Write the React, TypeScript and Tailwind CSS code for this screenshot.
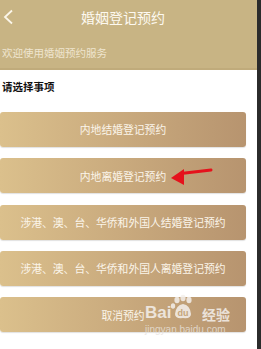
import React from "react";

const btns = [
  "内地结婚登记预约",
  "内地离婚登记预约",
  "涉港、澳、台、华侨和外国人结婚登记预约",
  "涉港、澳、台、华侨和外国人离婚登记预约",
  "取消预约",
];

export default function App() {
  return (
    <div
      className="w-[261px] h-[349px] flex bg-[#2b2b2b] overflow-hidden"
      style={{ fontFamily: '"Noto Sans CJK SC", "Noto Sans", sans-serif' }}
    >
      <div className="relative w-[257px] h-full bg-white">
        <div className="h-[70px] bg-[#c8b484] border-b-[2px] border-[#c0ab7b] flex flex-col">
          <div className="relative h-[34px] w-[246px] flex items-center justify-center">
            <svg className="absolute left-[2px] top-[9px]" width="12" height="16" viewBox="0 0 12 16">
              <polyline points="10,1.5 3,8 10,14.5" fill="none" stroke="#fbf6ea" strokeWidth="1.8" strokeLinejoin="miter" />
            </svg>
            <span className="text-[14px] leading-[16px] text-[#fdf9f0]">婚姻登记预约</span>
          </div>
          <div className="mt-[12px] pl-[2px] text-[10.5px] leading-[14px] text-[#efe5cf]">欢迎使用婚姻预约服务</div>
        </div>
        <div className="mt-[9px] h-[16px] pl-[2px] text-[10.5px] leading-[16px] font-bold text-[#111]">请选择事项</div>
        <div className="mt-[17px] flex flex-col gap-[11.3px]">
          {btns.map((t) => (
            <div
              key={t}
              className="w-[246px] h-[35px] rounded-[3px] bg-gradient-to-r from-[#dbc08c] to-[#b7946f] shadow-[0_1px_1px_rgba(0,0,0,0.12)] flex items-center justify-center text-[10.8px] text-[#fbf5ea]"
            >
              {t}
            </div>
          ))}
        </div>
        <svg className="absolute left-0 top-0 pointer-events-none" width="257" height="349" viewBox="0 0 257 349">
          <line x1="181" y1="173.5" x2="211" y2="170" stroke="#e5121c" strokeWidth="3" strokeLinecap="round" />
          <polygon points="171,178 184,169 184,185" fill="#e5121c" />
        </svg>
        <span
          className="absolute left-[145px] top-[303px] text-[17px] font-bold leading-[20px] text-[#f4f0ec] opacity-85 pointer-events-none"
          style={{ fontFamily: '"Liberation Sans", sans-serif' }}
        >
          Bai
        </span>
        <svg width="26" height="26" viewBox="0 0 26 26" className="absolute left-[170px] top-[294px] opacity-85 pointer-events-none">
          <ellipse cx="7" cy="6" rx="2.6" ry="3.2" fill="#f4f0ec" />
          <ellipse cx="13" cy="4" rx="2.6" ry="3.2" fill="#f4f0ec" />
          <ellipse cx="19" cy="6" rx="2.6" ry="3.2" fill="#f4f0ec" />
          <ellipse cx="3" cy="12" rx="2.2" ry="2.8" fill="#f4f0ec" />
          <path d="M5 20 Q6 11 13 10 Q20 11 21 20 Q21 25 13 24 Q5 25 5 20 Z" fill="#f4f0ec" />
          <text x="13" y="22" textAnchor="middle" fontSize="9" fontWeight="bold" fill="#c7a77c" fontFamily="Liberation Sans, sans-serif">du</text>
        </svg>
        <span className="absolute left-[202px] top-[304px] text-[14px] font-bold leading-[20px] text-[#f4f0ec] opacity-85 pointer-events-none">
          经验
        </span>
        <div
          className="absolute left-[145px] top-[324px] text-[10px] leading-[12px] text-[#e8e2dc] opacity-80 pointer-events-none"
          style={{ fontFamily: '"Liberation Sans", sans-serif' }}
        >
          jingyan.baidu.com
        </div>
      </div>
    </div>
  );
}
